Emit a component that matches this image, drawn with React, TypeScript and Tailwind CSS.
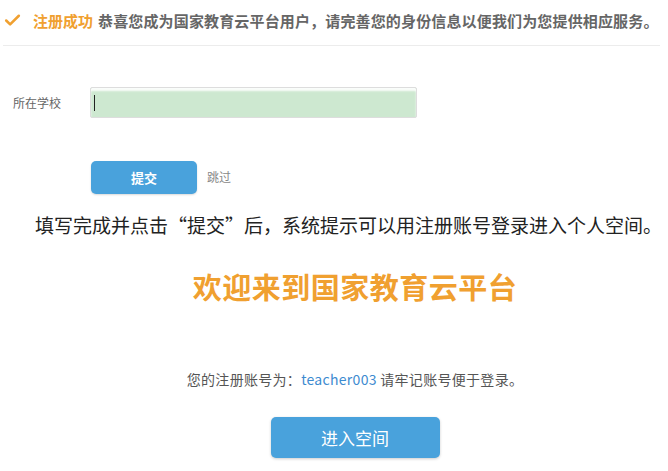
import { Check } from "lucide-react"

const font = { fontFamily: '"Microsoft YaHei", "Noto Sans CJK SC", "Noto Sans", sans-serif' }

function App() {
   return (
      <div className="w-[668px] h-[471px] bg-white overflow-hidden" style={font}>
         {/* header */}
         <div className="ml-[3px] mr-[8px] h-[46px] pt-[10px] flex items-start border-b border-[#ececec] whitespace-nowrap">
            <Check className="size-[19px] shrink-0 text-[#f0a030] mt-[1px]" strokeWidth={3.2} />
            <span className="ml-[11px] shrink-0 text-[15px] leading-[22px] font-bold text-[#f0a030]">注册成功</span>
            <span className="ml-[5px] shrink-0 text-[15px] leading-[22px] font-bold text-[#666] tracking-[0.15px]">
               恭喜您成为国家教育云平台用户，请完善您的身份信息以便我们为您提供相应服务。
            </span>
         </div>

         {/* form */}
         <div className="mt-[41px] flex items-center">
            <label className="w-[90px] pl-[13px] text-[12px] text-[#666]">所在学校</label>
            <div className="w-[327px] h-[31px] border border-[#ddd] rounded-[2px] bg-[#cde8d0] shadow-[inset_0_3px_2px_rgba(255,255,255,0.9)] flex items-center pl-[3px]">
               <span className="w-[1px] h-[16px] bg-[#222]" />
            </div>
         </div>

         <div className="mt-[43px] flex items-center pl-[91px]">
            <button
               type="button"
               className="w-[106px] h-[33px] rounded-[5px] bg-[#49a2dc] text-white text-[13px] font-bold shadow-[0_1px_2px_rgba(0,0,0,0.15)]"
            >提交</button>
            <span className="ml-[10px] mt-[-2px] text-[12px] text-[#888]">跳过</span>
         </div>

         <p className="mt-[18px] pl-[35px] text-[19px] leading-[26px] text-[#222] whitespace-nowrap">
            填写完成并点击“提交”后，系统提示可以用注册账号登录进入个人空间。
         </p>

         {/* welcome */}
         <div className="pl-[42px] flex flex-col items-center">
            <h1 className="mt-[30px] text-[29px] leading-[36px] font-bold text-[#f0a030] tracking-[0.5px]">欢迎来到国家教育云平台</h1>
            <p className="mt-[65px] text-[14px] leading-[20px] text-[#555] tracking-[0.3px]">
               您的注册账号为：<span className="text-[#3d8bd0]">teacher003</span> 请牢记账号便于登录。
            </p>
            <button
               type="button"
               className="mt-[28px] w-[169px] h-[41px] rounded-[5px] bg-[#49a2dc] text-white text-[17px] shadow-[0_1px_3px_rgba(0,0,0,0.2)]"
            >进入空间</button>
         </div>
      </div>
   )
}

export default App
